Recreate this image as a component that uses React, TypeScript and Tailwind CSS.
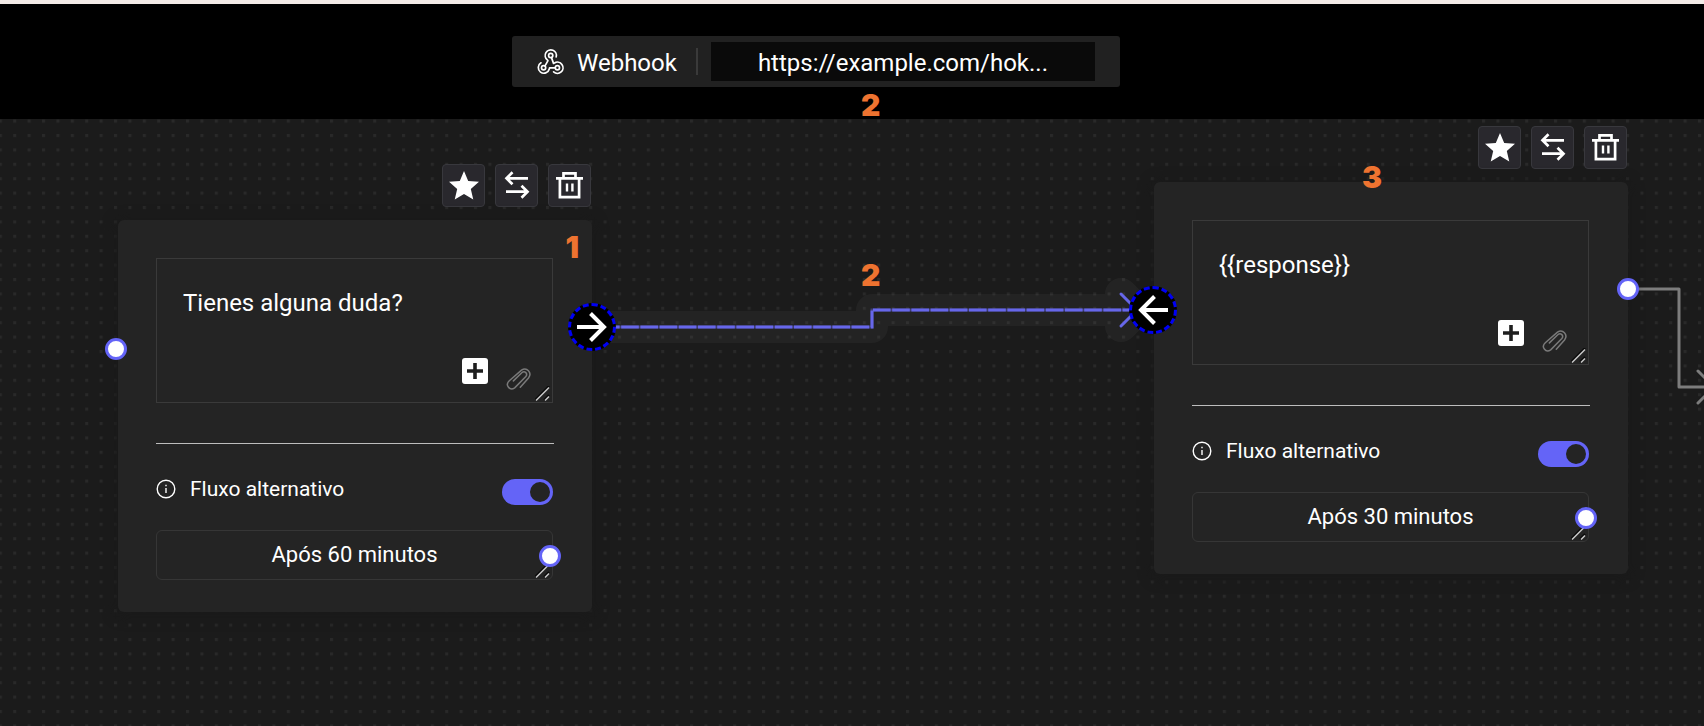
import type { ReactNode } from 'react';
import clsx from 'clsx';
import { MdStar } from 'react-icons/md';

interface FlowNodeProps {
  id: string;
  message: string;
  delay: string;
  className: string;
  children?: ReactNode;
}

const WebhookIcon = () => (
  <svg viewBox="0 0 28 28" className="size-7 shrink-0" fill="none" stroke="currentColor" strokeWidth="1.7" strokeLinecap="round" strokeLinejoin="round">
    <circle cx="13.7" cy="7.5" r="2.1" />
    <circle cx="6.6" cy="19.8" r="2.1" />
    <circle cx="20.4" cy="19.8" r="2.1" />
    <path d="M4 14.8a5.6 5.6 0 1 0 8.3 6.2l.3-1.2h5.6" />
    <path d="M16.6 23.9a5.6 5.6 0 1 0 .9-8.9l-1 .4-2-5.8" />
    <path d="M19.2 8.9a5.6 5.6 0 1 0-8.9 3l.7.8-3 5.2" />
  </svg>
);

const SwapIcon = () => (
  <svg viewBox="0 0 43 43" className="size-[43px] shrink-0" fill="none" stroke="currentColor" strokeWidth="2.7">
    <path d="M33 14.3H12M17.5 8.3l-6 6 6 6" />
    <path d="M11 27.7h21M26.5 21.7l6 6-6 6" />
  </svg>
);

const TrashIcon = () => (
  <svg viewBox="0 0 43 43" className="size-[43px] shrink-0" fill="none" stroke="currentColor" strokeWidth="2.7">
    <path d="M8 14.3h27M11.9 14.3v18.9h19.2V14.3M15.5 14.3V9.4h12v4.9" />
    <path d="M19 19.5v8M24.4 19.5v8" strokeWidth="2.4" />
  </svg>
);

const ClipIcon = () => (
  <svg viewBox="0 0 26 24" className="h-6 w-[26px]" fill="none" stroke="currentColor" strokeWidth="1.5" strokeLinecap="round">
    <path d="M14.3 20.3l8.2-9.3c4-5.4-1.8-11.4-7-7.8L3.3 13.7c-4.6 4.2.2 10.4 5.4 7.2L19.6 9.8c2.8-3.4-1-6.4-3.8-4L7.4 13.9" />
  </svg>
);

const InfoIcon = () => (
  <svg viewBox="0 0 20 20" className="size-5 shrink-0" fill="none" stroke="currentColor" strokeWidth="1.4">
    <circle cx="10" cy="10" r="8.8" />
    <path d="M10 9v5M10 5.8v1.4" />
  </svg>
);

const ResizeGrip = () => (
  <svg viewBox="0 0 15 15" className="pointer-events-none absolute right-[3px] bottom-[2px] size-[15px]" fill="none">
    <path d="M0 14L14 0M9 14l5-5" stroke="#0a0a0a" strokeWidth="2" />
    <path d="M1 14.5L14 1.5M10 14.5l4-4" stroke="#c8c8c8" strokeWidth="1.5" />
  </svg>
);

const Handle = ({ className }: { className: string }) => (
  <span className={clsx('absolute size-[22px] rounded-full border-3 border-[#6464f7] bg-white', className)} />
);

const Connector = ({ className, flip }: { className: string; flip?: boolean }) => (
  <span className={clsx('absolute flex size-12 items-center justify-center rounded-full border-3 border-dashed border-[#0000f5] bg-black', className)}>
    <svg viewBox="0 0 48 48" className={clsx('size-12 shrink-0', flip && 'rotate-180')} fill="none" stroke="#fff" strokeWidth="4">
      <path d="M9 24h27M22.5 10.5L36 24 22.5 37.5" />
    </svg>
  </span>
);

const Marker = ({ children, className }: { children: ReactNode; className: string }) => (
  <span className={clsx("absolute font-['Inter',sans-serif] text-[30px] leading-[30px] font-black text-[#ee7330]", className)}>
    {children}
  </span>
);

const toolButton =
  'flex size-[43px] items-center justify-center overflow-hidden rounded border border-[#38383d] bg-[#29282d]';

const FlowNode = ({ id, message, delay, className, children }: FlowNodeProps) => (
  <div className={clsx('absolute w-[474px]', className)}>
    <div className="mb-[13px] flex justify-end gap-[10px] pr-px">
      <button type="button" aria-label="Favorito" className={toolButton}>
        <MdStar className="size-9 shrink-0" />
      </button>
      <button type="button" aria-label="Alternar" className={toolButton}>
        <SwapIcon />
      </button>
      <button type="button" aria-label="Excluir" className={toolButton}>
        <TrashIcon />
      </button>
    </div>

    <div className="relative rounded-md bg-[#242424] px-[38px] pt-[38px] pb-8 shadow-[0_2px_12px_4px_#1a1a1a]">
      <div className="relative mr-px">
        <textarea
          aria-label="Mensagem"
          defaultValue={message}
          className="block h-[145px] w-full resize-none border border-[#3a3a3a] pt-7 pr-6 pl-[26px] text-2xl outline-none"
        />
        <div className="absolute right-[21px] bottom-3 flex items-start gap-[18px]">
          <button type="button" aria-label="Adicionar" className="flex size-[26px] items-center justify-center rounded-[3px] bg-white">
            <svg viewBox="0 0 16 16" className="size-4" stroke="#1e1e1e" strokeWidth="3.6">
              <path d="M0 8h16M8 0v16" />
            </svg>
          </button>
          <button type="button" aria-label="Anexar" className="mt-[9px] text-[#7a7a7a]">
            <ClipIcon />
          </button>
        </div>
        <ResizeGrip />
      </div>

      <hr className="mt-10 border-[#bdbdbd]" />

      <div className="mt-[35px] mr-px mb-[25px] flex h-[26px] items-start justify-between">
        <label htmlFor={`${id}-alt`} className="flex items-center gap-[14px] text-[21px] leading-5">
          <InfoIcon />
          Fluxo alternativo
        </label>
        <input
          id={`${id}-alt`}
          type="checkbox"
          role="switch"
          defaultChecked
          className="h-[26px] w-[51px] appearance-none rounded-full bg-[#6464f7] p-[3px] before:block before:size-5 before:rounded-full before:bg-[#242424] checked:before:ml-[25px]"
        />
      </div>

      <div className="relative mr-px">
        <textarea
          aria-label="Tempo de espera"
          defaultValue={delay}
          className="block h-[50px] w-full resize-none overflow-hidden rounded-md border border-[#363636] pt-2 text-center text-[22px] leading-8 outline-none"
        />
        <ResizeGrip />
        <Handle className="-right-2 top-[15px]" />
      </div>
      {children}
    </div>
  </div>
);

const Edges = () => (
  <svg className="absolute inset-0 size-full" fill="none">
    <defs>
      <pattern id="dots" x="-1.2" y="0.6" width="14.4" height="14.4" patternUnits="userSpaceOnUse">
        <rect width="3" height="3" fill="#292929" />
      </pattern>
    </defs>
    <rect width="100%" height="100%" fill="url(#dots)" />
    <g stroke="#fff" strokeWidth="32" strokeLinejoin="round" strokeLinecap="round" opacity="0.035">
      <path d="M592 208H872V191H1137" />
      <path d="M1121 175l16 16-16 16" />
    </g>
    <g stroke="#6767ea" strokeWidth="3">
      <path d="M592 208H872V191H1137" strokeOpacity="0.4" />
      <path d="M592 208H872V191H1137" strokeDasharray="17.6 1.6" strokeDashoffset="-10" />
      <path d="M1121 175l16 16-16 16" strokeLinecap="round" />
    </g>
    <g stroke="#7d7d7d" strokeWidth="3" strokeLinejoin="round" strokeLinecap="round">
      <path d="M1630 170h49v98h34" />
      <path d="M1698 252l16 16-16 16" />
    </g>
  </svg>
);

export default function App() {
  return (
    <div className="flex min-h-screen flex-col border-t-4 border-[#f3ebe8] bg-black font-['Roboto',sans-serif] text-white">
      <header className="py-8 pl-128">
        <div className="relative flex h-[51px] w-[608px] items-center rounded-[3px] bg-[#212121] px-[25px]">
          <WebhookIcon />
          <label htmlFor="webhook-url" className="ml-3 pt-[2px] text-2xl leading-7">
            Webhook
          </label>
          <span className="ml-[19px] h-[27px] w-[2px] bg-[#3a3a3a]" />
          <input
            id="webhook-url"
            type="text"
            defaultValue="https://example.com/hok..."
            className="ml-[13px] h-[39px] min-w-0 flex-1 bg-[#0a0a0a] pt-[3px] text-center text-2xl outline-none"
          />
          <Marker className="top-[54px] left-[349px]">2</Marker>
        </div>
      </header>

      <main className="relative flex-1 overflow-hidden bg-[#1b1b1b]">
        <Edges />

        <FlowNode id="question" message="Tienes alguna duda?" delay="Após 60 minutos" className="top-[45px] left-[118px]">
          <Handle className="top-[118px] -left-[13px]" />
          <Connector className="top-[83px] -right-6" />
          <Marker className="top-3 right-[13px]">1</Marker>
        </FlowNode>

        <FlowNode id="response" message="{{response}}" delay="Após 30 minutos" className="top-[7px] left-[1154px]">
          <Connector className="top-[104px] -left-[25px]" flip />
          <Handle className="top-[96px] -right-[11px]" />
          <Marker className="-top-5 left-[208px]">3</Marker>
        </FlowNode>

        <Marker className="top-[141px] left-[861px]">2</Marker>
      </main>
    </div>
  );
}
